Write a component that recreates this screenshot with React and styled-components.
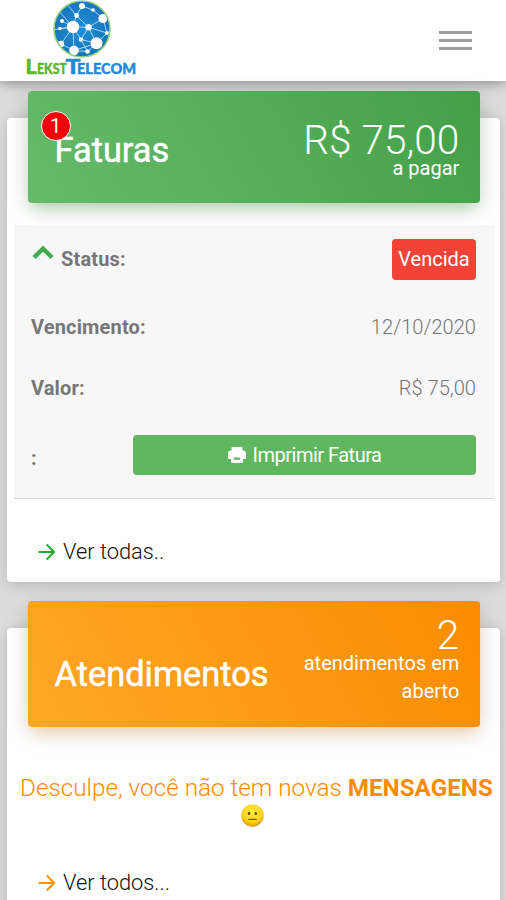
import styled, { createGlobalStyle } from "styled-components";

const GlobalStyle = createGlobalStyle`
	* {
		box-sizing: border-box;
	}

	body {
		margin: 0;
		background: #dcdcdc;
		font-family: Roboto, "Liberation Sans", sans-serif;
		font-weight: 300;
		overflow: hidden;
	}
`;

const NODES = [
	[49, 27, 6.2],
	[79, 18.5, 4.6],
	[72.5, 43.3, 6],
	[50, 50.5, 4.8],
	[64.5, 27.3, 3.2],
	[37, 44, 3.2],
	[57, 39.5, 2.2],
	[52.5, 15.5, 2.4],
	[38, 21, 2],
	[58, 6, 3],
	[63.5, 51.5, 2.3],
	[83, 33, 2],
	[69, 10, 1.8],
	[36, 28.5, 1.8],
];

// Pairs of node indexes joined by a line
const LINKS = [
	[0, 4],
	[0, 5],
	[0, 7],
	[0, 8],
	[0, 6],
	[0, 3],
	[0, 13],
	[4, 1],
	[4, 2],
	[4, 7],
	[4, 6],
	[7, 9],
	[9, 12],
	[12, 1],
	[1, 11],
	[11, 2],
	[2, 3],
	[2, 10],
	[6, 2],
	[5, 3],
	[10, 3],
	[6, 10],
	[4, 11],
];

const Logo = () => (
	<LogoSvg viewBox="0 0 114 80" role="img" aria-label="LeksTTelecom">
		<defs>
			<radialGradient id="globe">
				<stop offset="0" stopColor="#1b8fdb" />
				<stop offset="1" stopColor="#1976b8" />
			</radialGradient>
			<clipPath id="globeClip">
				<circle cx="58" cy="29" r="27.2" />
			</clipPath>
		</defs>
		<circle cx="58" cy="29" r="28" fill="url(#globe)" stroke="#95d47c" strokeWidth="1.6" />
		<g clipPath="url(#globeClip)">
			<g stroke="#a9d8f3" strokeWidth="1">
				{LINKS.map(([from, to]) => (
					<line
						key={`${from}-${to}`}
						x1={NODES[from][0]}
						y1={NODES[from][1]}
						x2={NODES[to][0]}
						y2={NODES[to][1]}
					/>
				))}
				<path d="M49 27L28 30M49 27L34 10M52.5 15.5L42 3M37 44L28 36M37 44L34 54M83 33L90 31M79 18.5L84 10" />
			</g>
			<g fill="#fff">
				{NODES.map(([x, y, r]) => (
					<circle key={`${x}-${y}`} cx={x} cy={y} r={r} />
				))}
			</g>
		</g>
		<g fontFamily="Lato, sans-serif" fontWeight="900" strokeWidth="0.4" strokeLinejoin="round">
			<g fill="#5cb531" stroke="#5cb531">
				<text y="74" fontSize="21.5" x="1.5">L</text>
				<text y="74" fontSize="14.8" x="13" textLength="30" lengthAdjust="spacingAndGlyphs">EKST</text>
			</g>
			<g fill="#1f8ad9" stroke="#1f8ad9">
				<text y="74" fontSize="21.5" x="41.5" textLength="15" lengthAdjust="spacingAndGlyphs">T</text>
				<text y="74" fontSize="14.8" x="53" textLength="59" lengthAdjust="spacingAndGlyphs">ELECOM</text>
			</g>
		</g>
	</LogoSvg>
);

const ArrowIcon = () => (
	<Arrow viewBox="0 0 18 18">
		<path d="M0.5 9H16M8.7 1.5L16.2 9L8.7 16.5" />
	</Arrow>
);

const ChevronIcon = () => (
	<Chevron viewBox="0 0 22 15">
		<path d="M2 12.5L11 3.6L20 12.5" />
	</Chevron>
);

const PrinterIcon = () => (
	<Printer viewBox="0 0 18 17">
		<path
			fill="#fff"
			d="M4.2 0H13.8Q14.5 0 14.5 .8V3.6H15.2Q18 3.8 18 6.5V12H15V14.8Q15 16 13.8 16H4.2Q3 16 3 14.8V12H0V6.5Q0 3.8 2.8 3.6H3.5V.8Q3.5 0 4.2 0Z"
		/>
		<rect x="5.7" y="10.5" width="6.6" height="2.3" rx="1" fill="#60b75f" />
	</Printer>
);

// Neutral face with a soft yellow shading
const NeutralFace = () => (
	<Face viewBox="0 0 23 23" role="img" aria-label="neutral">
		<defs>
			<radialGradient id="face" cx="50%" cy="35%" r="65%">
				<stop offset="0" stopColor="#ffee35" />
				<stop offset="0.65" stopColor="#fcd420" />
				<stop offset="1" stopColor="#dd9813" />
			</radialGradient>
		</defs>
		<circle cx="11.5" cy="11.5" r="11.2" fill="url(#face)" />
		<ellipse cx="8" cy="9.4" rx="1.3" ry="1.7" fill="#6b5012" />
		<ellipse cx="14.8" cy="9.4" rx="1.3" ry="1.7" fill="#6b5012" />
		<path d="M7.7 15.4H15.3" stroke="#7b5a12" strokeWidth="1.2" strokeLinecap="round" />
	</Face>
);

const App = () => {
	return (
		<Page>
			<GlobalStyle />
			<Header>
				<Logo />
				<MenuButton aria-label="Menu">
					<MenuBar />
					<MenuBar />
					<MenuBar />
				</MenuButton>
			</Header>

			<Card $height="464px">
				<Banner $color="green">
					<BannerTitle $top="6px">
						Faturas
						<Badge>1</Badge>
					</BannerTitle>
					<Summary $top="28px">
						<SummaryValue>R$ 75,00</SummaryValue>
						<SummaryText>a pagar</SummaryText>
					</Summary>
				</Banner>
				<InvoiceTable>
					<Row $height="71px" $bottom="2px">
						<Label $bottom="4px">
							<ChevronIcon />
							Status:
						</Label>
						<StatusTag>Vencida</StatusTag>
					</Row>
					<Row $height="61px">
						<Label>Vencimento:</Label>
						<Value>12/10/2020</Value>
					</Row>
					<Row $height="61px">
						<Label>Valor:</Label>
						<Value>R$ 75,00</Value>
					</Row>
					<Row $height="75px" $bottom="1px">
						<Label $top="5px">:</Label>
						<PrintButton>
							<PrinterIcon />
							Imprimir Fatura
						</PrintButton>
					</Row>
				</InvoiceTable>
				<MoreLink $color="#21aa2b">
					<ArrowIcon />
					Ver todas..
				</MoreLink>
			</Card>

			<Card $height="320px">
				<Banner $color="orange">
					<BannerTitle $top="20px">Atendimentos</BannerTitle>
					<Summary $top="13px">
						<SummaryValue>2</SummaryValue>
						<SummaryText>
							atendimentos em
							<br />
							aberto
						</SummaryText>
					</Summary>
				</Banner>
				<Message>
					<MessageText>
						Desculpe, você não tem novas <strong>MENSAGENS</strong>
					</MessageText>
					<NeutralFace />
				</Message>
				<MoreLink $color="#ff9307">
					<ArrowIcon />
					Ver todos...
				</MoreLink>
			</Card>
		</Page>
	);
};

const Page = styled.div`
	width: 506px;
	height: 900px;
	overflow: hidden;
	background: #dcdcdc;
`;

const Header = styled.header`
	display: flex;
	justify-content: space-between;
	height: 81px;
	padding: 0 34px 0 24px;
	background: #fff;
	box-shadow: 0 2px 12px rgba(0, 0, 0, 0.38);
`;

const LogoSvg = styled.svg`
	width: 114px;
	height: 80px;
`;

const MenuButton = styled.button`
	display: flex;
	flex-direction: column;
	justify-content: space-between;
	align-self: flex-start;
	width: 33px;
	height: 19px;
	margin-top: 31px;
	padding: 0;
	border: 0;
	background: none;
`;

const MenuBar = styled.span`
	height: 3px;
	width: 33px;
	background: #9d9d9d;
`;

const Card = styled.section`
	display: flex;
	flex-direction: column;
	height: ${(props) => props.$height};
	margin: 37px 6px 46px 7px;
	padding: 0 6px 0 7px;
	border-radius: 4px;
	background: #fff;
	box-shadow: 0 3px 14px rgba(0, 0, 0, 0.17);

	& + & {
		margin-top: 0;
	}
`;

const Banner = styled.div`
	display: flex;
	justify-content: space-between;
	align-items: flex-start;
	height: ${(props) => (props.$color === "green" ? "112px" : "125.5px")};
	margin: -27px 14px 0 13.5px;
	padding: 0 20.7px 0 27px;
	border-radius: 4px;
	color: #fff;
	background: ${(props) =>
		props.$color === "green"
			? "linear-gradient(60deg, #66bb6a, #43a047)"
			: "linear-gradient(60deg, #ffa726, #fb8c00)"};
	box-shadow: ${(props) =>
		props.$color === "green"
			? "0 5px 26px rgba(0, 0, 0, 0.13), 0 8px 14px -4px rgba(76, 175, 80, 0.35)"
			: "0 5px 26px rgba(0, 0, 0, 0.13), 0 8px 14px -4px rgba(255, 152, 0, 0.3)"};
`;

const BannerTitle = styled.h2`
	position: relative;
	margin: 33px 0 0;
	padding-top: ${(props) => props.$top};
	font-size: 34.4px;
	font-weight: 400;
	line-height: 41px;
	white-space: nowrap;
	-webkit-text-stroke: 0.5px #fff;
`;

const Badge = styled.span`
	position: absolute;
	top: -13px;
	left: -14px;
	display: flex;
	justify-content: center;
	align-items: center;
	width: 30px;
	height: 30px;
	border: 1.5px solid #fff;
	border-radius: 50%;
	background: #f8000b;
	font-size: 20px;
	font-weight: 400;
	-webkit-text-stroke: 0;
`;

const Summary = styled.div`
	padding-top: ${(props) => props.$top};
	text-align: right;
`;

const SummaryValue = styled.div`
	height: 35px;
	font-size: 40.6px;
	line-height: 43px;
`;

const SummaryText = styled.div`
	font-size: 20px;
	font-weight: 400;
	line-height: 28px;
`;

const InvoiceTable = styled.div`
	height: 274px;
	margin-top: 22px;
	border-bottom: 1.5px solid #d5d5d5;
	background: #f7f7f7;
`;

const Row = styled.div`
	display: flex;
	justify-content: space-between;
	align-items: center;
	height: ${(props) => props.$height};
	padding: 0 18px ${(props) => props.$bottom || "0"} 17px;
`;

const Label = styled.div`
	padding-top: ${(props) => props.$top || "0"};
	padding-bottom: ${(props) => props.$bottom || "0"};
	color: #777;
	font-size: 20px;
	font-weight: 700;
	letter-spacing: 0.15px;
`;

const Chevron = styled.svg`
	width: 22px;
	height: 15px;
	margin: 0 7px 6px 1px;
	vertical-align: baseline;

	path {
		fill: none;
		stroke: #43aa50;
		stroke-width: 4.4;
	}
`;

const Value = styled.div`
	color: #757575;
	font-size: 20.1px;
`;

const StatusTag = styled.div`
	width: 84px;
	height: 41px;
	border-radius: 4px;
	background: #f44336;
	color: #fff;
	font-size: 20px;
	font-weight: 400;
	line-height: 41px;
	text-align: center;
`;

const PrintButton = styled.button`
	display: flex;
	justify-content: center;
	align-items: center;
	gap: 7px;
	width: 343px;
	height: 40px;
	padding: 0;
	border: 0;
	border-radius: 4px;
	background: #60b75f;
	color: #fff;
	font-family: inherit;
	font-size: 20px;
	font-weight: 400;
	letter-spacing: -0.5px;
`;

const Printer = styled.svg`
	width: 18px;
	height: 17px;
`;

const MoreLink = styled.a`
	display: flex;
	align-items: center;
	gap: 7px;
	margin-top: 39px;
	padding-left: 24px;
	color: #111;
	font-size: 21.8px;
	line-height: 28px;

	svg {
		stroke: ${(props) => props.$color};
	}
`;

const Arrow = styled.svg`
	width: 18px;
	height: 18px;
	fill: none;
	stroke-width: 2;
`;

const Message = styled.div`
	display: flex;
	flex-direction: column;
	align-items: center;
	height: 56px;
	margin-top: 47px;
	color: #fb8c00;
	font-size: 24.25px;
	line-height: 28px;
	white-space: nowrap;

	strong {
		font-weight: 700;
	}
`;

const MessageText = styled.span`
	margin-left: 5px;
`;

const Face = styled.svg`
	width: 23px;
	height: 23px;
	margin: 2px 4px 0 0;
`;

export default App;
